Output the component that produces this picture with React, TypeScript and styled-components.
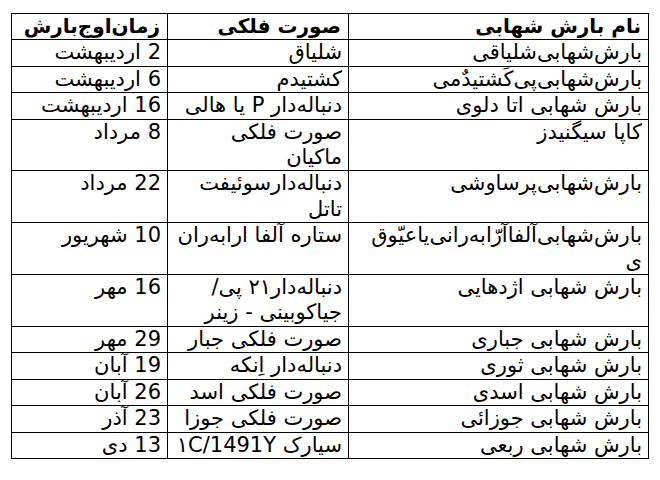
import React from 'react';
import styled, { createGlobalStyle } from 'styled-components';

const GlobalStyle = createGlobalStyle`
  html, body {
    margin: 0;
    padding: 0;
    background: #ffffff;
  }
  body {
    font-family: "DejaVu Sans", sans-serif;
    color: #000000;
  }
`;

const Page = styled.div`
  padding: 13px 12px 0 11px;
`;

const Table = styled.table`
  direction: rtl;
  width: 637px;
  table-layout: fixed;
  border-collapse: collapse;
  border: 1px solid #000000;
  font-size: 21px;
  line-height: 25.4px;
`;

const Col = styled.col<{ $width: number }>`
  width: ${({ $width }) => $width}px;
`;

const HeadCell = styled.th`
  border: 1px solid #000000;
  padding: 0 7px 0 4px;
  text-align: right;
  vertical-align: top;
  font-size: 20px;
  font-weight: 700;
  white-space: nowrap;
`;

const Cell = styled.td`
  border: 1px solid #000000;
  padding: 0 6px 0 4px;
  text-align: right;
  vertical-align: top;
  font-weight: 400;
  white-space: nowrap;
`;

const Ltr = styled.bdi`
  direction: ltr;
  unicode-bidi: isolate;
`;

type Row = {
  name: React.ReactNode;
  source: React.ReactNode;
  date: string;
};

const rows: Row[] = [
  { name: 'بارش‌شهابی‌شلیاقی', source: 'شلیاق', date: '2 اردیبهشت' },
  { name: 'بارش‌شهابی‌پی‌کَشتیدٌمی', source: 'کشتیدم', date: '6 اردیبهشت' },
  { name: 'بارش شهابی اتا دلوی', source: 'دنباله‌دار P یا هالی', date: '16 اردیبهشت' },
  {
    name: 'کاپا سیگنیدز',
    source: (
      <>
        صورت فلکی
        <br />
        ماکیان
      </>
    ),
    date: '8 مرداد',
  },
  {
    name: 'بارش‌شهابی‌پرساوشی',
    source: (
      <>
        دنباله‌دارسوئیفت
        <br />
        تاتل
      </>
    ),
    date: '22 مرداد',
  },
  {
    name: (
      <>
        بارش‌شهابی‌آلفاآرّابه‌رانی‌یاعیّوق
        <br />ی
      </>
    ),
    source: 'ستاره آلفا ارابه‌ران',
    date: '10 شهریور',
  },
  {
    name: 'بارش شهابی اژدهایی',
    source: (
      <>
        دنباله‌دار۲۱ پی/
        <br />
        جیاکوبینی - زینر
      </>
    ),
    date: '16 مهر',
  },
  { name: 'بارش شهابی جباری', source: 'صورت فلکی جبار', date: '29 مهر' },
  { name: 'بارش شهابی ثوری', source: 'دنباله‌دار اِنکه', date: '19 آبان' },
  { name: 'بارش شهابی اسدی', source: 'صورت فلکی اسد', date: '26 آبان' },
  { name: 'بارش شهابی جوزائی', source: 'صورت فلکی جوزا', date: '23 آذر' },
  {
    name: 'بارش شهابی ربعی',
    source: (
      <>
        سیارک <Ltr>۱C/1491Y</Ltr>
      </>
    ),
    date: '13 دی',
  },
];

const App = () => {
  return (
    <>
      <GlobalStyle />
      <Page>
        <Table>
          <colgroup>
            <Col $width={300} />
            <Col $width={181} />
            <Col $width={156} />
          </colgroup>
          <thead>
            <tr>
              <HeadCell>نام بارش شهابی</HeadCell>
              <HeadCell>صورت فلکی</HeadCell>
              <HeadCell>زمان‌اوج‌بارش</HeadCell>
            </tr>
          </thead>
          <tbody>
            {rows.map((row, index) => (
              <tr key={index}>
                <Cell>{row.name}</Cell>
                <Cell>{row.source}</Cell>
                <Cell>{row.date}</Cell>
              </tr>
            ))}
          </tbody>
        </Table>
      </Page>
    </>
  );
};

export default App;
